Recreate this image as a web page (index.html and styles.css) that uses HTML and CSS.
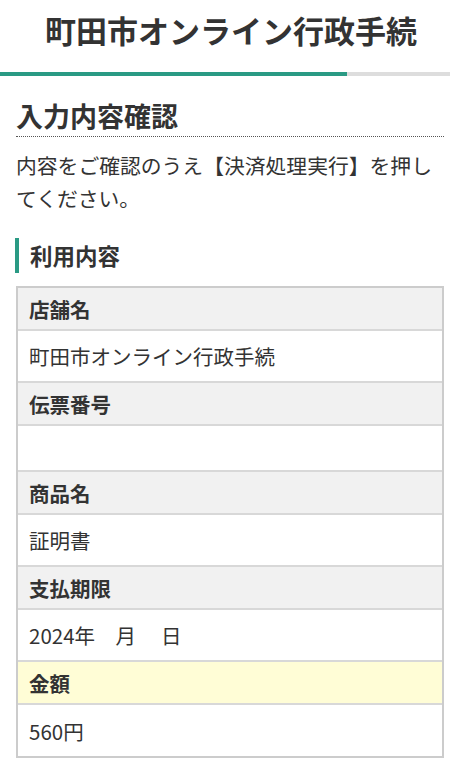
FILE: index.html
```html
<!DOCTYPE html>
<html lang="ja">
<head>
<meta charset="utf-8">
<title>町田市オンライン行政手続</title>
<link rel="stylesheet" href="styles.css">
</head>
<body>
<header class="site-header">
  <h1 class="site-title">町田市オンライン行政手続</h1>
  <div class="progress"><div class="progress-fill" style="width: 77.2%"></div></div>
</header>
<main class="content">
  <h2 class="page-heading">入力内容確認</h2>
  <p class="lead">内容をご確認のうえ【決済処理実行】を押してください。</p>
  <h3 class="section-heading">利用内容</h3>
  <dl class="detail">
    <dt class="detail-label">店舗名</dt>
    <dd class="detail-value">町田市オンライン行政手続</dd>
    <dt class="detail-label">伝票番号</dt>
    <dd class="detail-value detail-value--blank"></dd>
    <dt class="detail-label">商品名</dt>
    <dd class="detail-value">証明書</dd>
    <dt class="detail-label">支払期限</dt>
    <dd class="detail-value">2024年　月　 日</dd>
    <dt class="detail-label detail-label--amount">金額</dt>
    <dd class="detail-value detail-value--last">560円</dd>
  </dl>
</main>
</body>
</html>
```

FILE: styles.css
```css
* { box-sizing: border-box; }

html, body {
  margin: 0;
  padding: 0;
  background: #ffffff;
}

body {
  font-family: "Noto Sans CJK JP", "Noto Sans", sans-serif;
  color: #333333;
}

.site-header {
  display: flex;
  flex-direction: column;
}

.site-title {
  margin: 0;
  height: 72px;
  display: flex;
  align-items: center;
  justify-content: center;
  font-size: 31px;
  font-weight: 700;
  color: #333333;
  letter-spacing: 0;
  padding: 0 0 14px 12px;
}

.progress {
  height: 4px;
  background: #dddddd;
}

.progress-fill {
  height: 100%;
  background: #2a9a84;
}

.content {
  padding: 0 6px 0 16px;
}

.page-heading {
  margin: 22px 0 0;
  font-size: 27px;
  font-weight: 700;
  line-height: 36px;
  padding-bottom: 2px;
  border-bottom: 1px dotted #555555;
  color: #333333;
}

.lead {
  margin: 12px 0 0;
  font-size: 20.8px;
  line-height: 33px;
  color: #333333;
}

.section-heading {
  margin: 23px 0 0 -1px;
  font-size: 22.5px;
  font-weight: 700;
  line-height: 35px;
  border-left: 4px solid #2a9a84;
  padding-left: 11px;
  color: #333333;
}

.detail {
  margin: 13px 0 0;
  border: 2px solid #cccccc;
  display: flex;
  flex-direction: column;
}

.detail-label,
.detail-value {
  margin: 0;
  display: flex;
  align-items: center;
  padding-left: 11px;
  font-size: 20.5px;
  border-bottom: 2px solid #d8d8d8;
}

.detail-label {
  height: 43px;
  background: #f1f1f1;
  font-weight: 700;
  color: #333333;
}

.detail-label--amount {
  background: #fffdd6;
}

.detail-value {
  height: 52px;
  background: #ffffff;
  color: #333333;
  white-space: pre;
}

.detail-value--blank {
  height: 46px;
}

.detail-value--last {
  border-bottom: none;
  height: 51px;
}
```
